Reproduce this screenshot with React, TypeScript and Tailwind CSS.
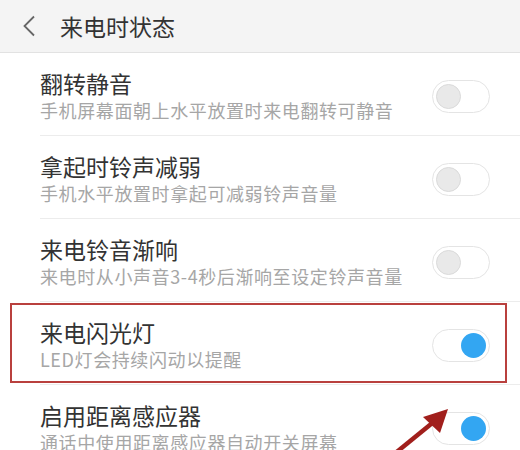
import React from 'react';

interface SettingItem {
  title: string;
  desc: string;
  on: boolean;
  highlight?: boolean;
}

const items: SettingItem[] = [
  { title: '翻转静音', desc: '手机屏幕面朝上水平放置时来电翻转可静音', on: false },
  { title: '拿起时铃声减弱', desc: '手机水平放置时拿起可减弱铃声音量', on: false },
  { title: '来电铃音渐响', desc: '来电时从小声音3-4秒后渐响至设定铃声音量', on: false },
  { title: '来电闪光灯', desc: 'LED灯会持续闪动以提醒', on: true, highlight: true },
  { title: '启用距离感应器', desc: '通话中使用距离感应器自动开关屏幕', on: true },
];

const Toggle: React.FC<{ on: boolean }> = ({ on }) => (
  <div
    className={`flex h-[33px] w-[58px] shrink-0 items-center rounded-full border-[1.5px] border-[#e4e4e4] bg-white px-[3px] ${
      on ? 'justify-end' : 'justify-start'
    }`}
  >
    {on ? (
      <div className="h-[25px] w-[25px] rounded-full bg-[#33a6f2]" />
    ) : (
      <div className="h-[25px] w-[25px] rounded-full border border-[#dadada] bg-[#e9e9e9]" />
    )}
  </div>
);

const Row: React.FC<{ item: SettingItem; last: boolean }> = ({ item, last }) => (
  <div className="relative h-[83px] pl-[40px]">
    <div className={`flex h-full items-start ${last ? '' : 'border-b border-[#ececec]'}`}>
      <div className="flex-1 pt-[15px]">
        <div className="text-[23px] leading-[30px] text-[#333333]">{item.title}</div>
        <div className="text-[18px] leading-[24px] tracking-[0.6px] text-[#a6a6a6]">{item.desc}</div>
      </div>
      <div className="mr-[30px] mt-[27px]">
        <Toggle on={item.on} />
      </div>
    </div>
    {item.highlight && (
      <div className="pointer-events-none absolute left-[10px] right-[13px] top-[1px] h-[80px] border-[2.5px] border-[#b9403e]" />
    )}
  </div>
);

export default function App() {
  return (
    <div
      className="relative h-[450px] w-[520px] overflow-hidden bg-white"
      style={{ fontFamily: '"Noto Sans CJK SC", "Noto Sans", sans-serif' }}
    >
      <div className="flex h-[53px] items-center border-b border-[#e2e2e2] bg-[#f4f4f4]">
        <svg width="14" height="22" viewBox="0 0 14 22" className="ml-[22px]">
          <polyline points="12,1.5 2.5,11 12,20.5" fill="none" stroke="#666666" strokeWidth="1.8" />
        </svg>
        <div className="ml-[24px] text-[23px] leading-none text-[#333333]">来电时状态</div>
      </div>

      {items.map((item, i) => (
        <Row key={item.title} item={item} last={i === items.length - 1} />
      ))}

      {/* annotation arrow */}
      <svg className="pointer-events-none absolute left-0 top-0" width="520" height="450">
        <line x1="393" y1="455" x2="436" y2="420" stroke="#a11f1c" strokeWidth="4.5" />
        <polygon points="448,409 423,417 440,433" fill="#a11f1c" />
      </svg>
    </div>
  );
}
